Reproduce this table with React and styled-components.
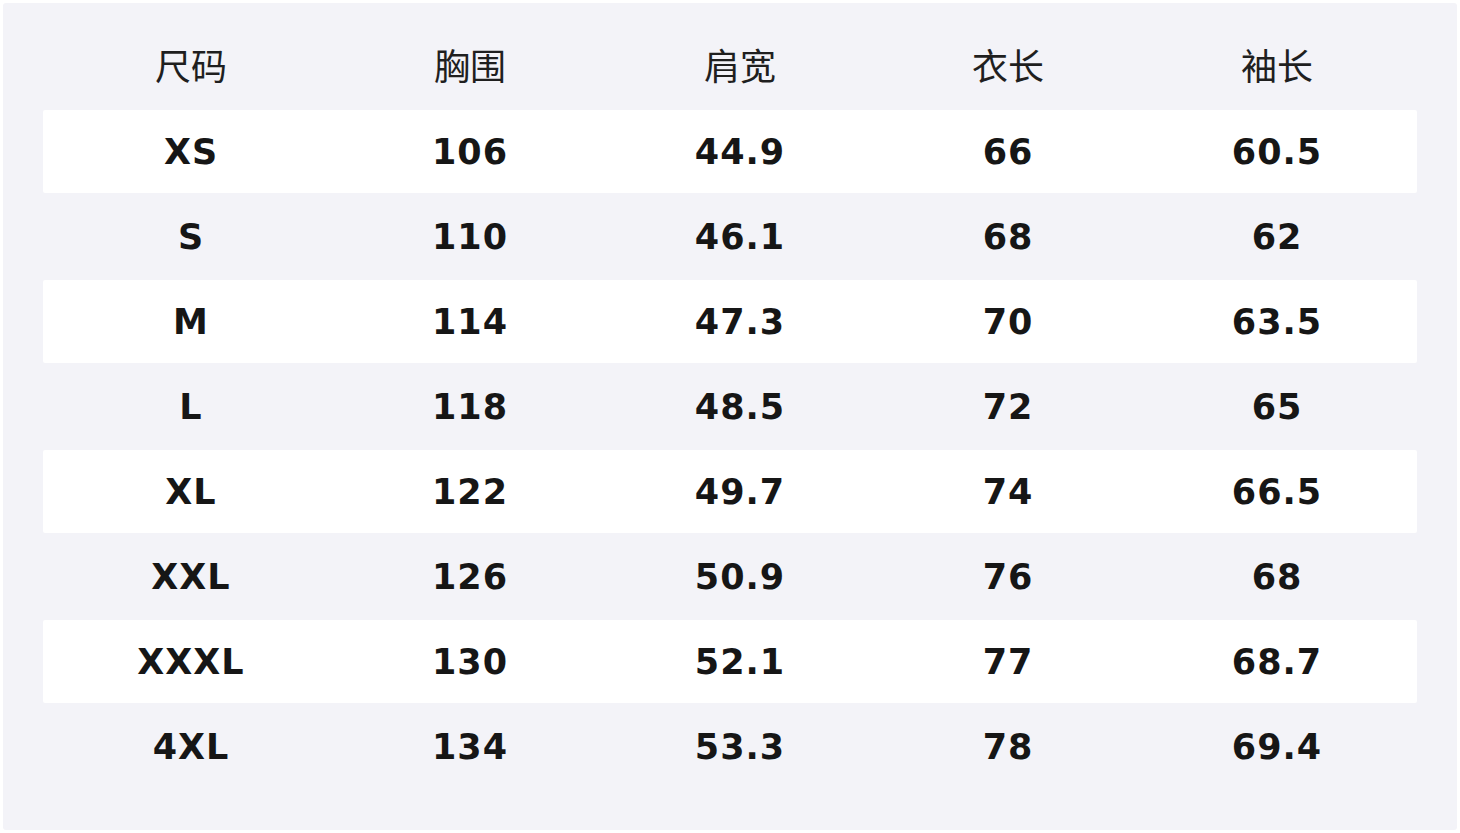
import React from 'react'
import styled, { createGlobalStyle } from 'styled-components'

const GlobalStyle = createGlobalStyle`
  html, body {
    margin: 0;
    padding: 0;
    background: #ffffff;
  }
`

/* STYLES */
const Panel = styled.div`
  box-sizing: border-box;
  width: 1454px;
  height: 827px;
  margin: 3px;
  padding: 40px 40px 42px;
  background: #f3f3f8;
  border-radius: 3px;
  display: flex;
  flex-direction: column;
  gap: 2px;
`

const Row = styled.div`
  display: grid;
  grid-template-columns: 296px 262px 278px 258px 280px;
  align-items: center;
  height: ${props => (props.head ? '65px' : '83px')};
  background: ${props => (props.striped ? '#ffffff' : 'transparent')};
  border-radius: 2px;
`

const HeadCell = styled.div`
  text-align: center;
  align-self: start;
  line-height: 42px;
  font-family: "Noto Sans CJK SC", "Noto Sans", sans-serif;
  font-size: 36px;
  font-weight: 400;
  color: #1f1f1f;
`

const Cell = styled.div`
  text-align: center;
  font-family: "DejaVu Sans", "Liberation Sans", sans-serif;
  font-size: 35px;
  font-weight: 700;
  color: #161616;
  letter-spacing: 1px;
`

/* DATA */
const headers = ['尺码', '胸围', '肩宽', '衣长', '袖长']

const sizes = [
  ['XS', '106', '44.9', '66', '60.5'],
  ['S', '110', '46.1', '68', '62'],
  ['M', '114', '47.3', '70', '63.5'],
  ['L', '118', '48.5', '72', '65'],
  ['XL', '122', '49.7', '74', '66.5'],
  ['XXL', '126', '50.9', '76', '68'],
  ['XXXL', '130', '52.1', '77', '68.7'],
  ['4XL', '134', '53.3', '78', '69.4']
]

/* PRESENTATION */
const App = () => (
  <>
    <GlobalStyle />
    <Panel>
      <Row head>
        {headers.map(h => <HeadCell key={h}>{h}</HeadCell>)}
      </Row>
      {sizes.map((row, i) => (
        <Row key={row[0]} striped={i % 2 === 0}>
          {row.map((v, j) => <Cell key={j}>{v}</Cell>)}
        </Row>
      ))}
    </Panel>
  </>
)

export default App
